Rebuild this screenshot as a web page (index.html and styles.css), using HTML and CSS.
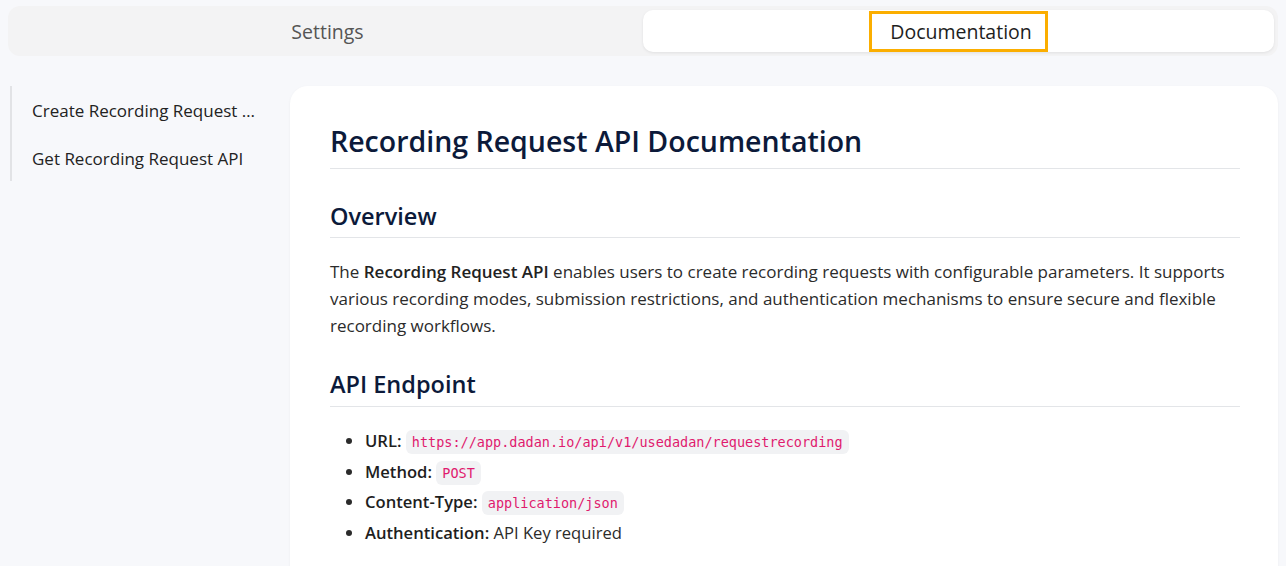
FILE: index.html
```html
<!DOCTYPE html>
<html lang="en">
<head>
<meta charset="utf-8">
<title>Documentation</title>
<link rel="stylesheet" href="styles.css">
</head>
<body>
<div class="page">
  <div class="tabs">
    <div class="tab">Settings</div>
    <div class="tab tab-active"><span class="focus">Documentation</span></div>
  </div>
  <div class="layout">
    <nav class="sidebar">
      <a class="nav-item">Create Recording Request API</a>
      <a class="nav-item">Get Recording Request API</a>
    </nav>
    <main class="card">
      <h1>Recording Request API Documentation</h1>
      <h2>Overview</h2>
      <p>The <strong>Recording Request API</strong> enables users to create recording requests with configurable parameters. It supports various recording modes, submission restrictions, and authentication mechanisms to ensure secure and flexible recording workflows.</p>
      <h2 class="h2-b">API Endpoint</h2>
      <ul>
        <li><strong>URL:</strong> <code>https://app.dadan.io/api/v1/usedadan/requestrecording</code></li>
        <li><strong>Method:</strong> <code>POST</code></li>
        <li><strong>Content-Type:</strong> <code>application/json</code></li>
        <li><strong>Authentication:</strong> API Key required</li>
      </ul>
    </main>
  </div>
</div>
</body>
</html>
```
FILE: styles.css
```css
* { box-sizing: border-box; }
html, body { margin: 0; padding: 0; }
body {
  background: #f7f8fb;
  font-family: "Open Sans", "Noto Sans", sans-serif;
  color: #222;
  overflow: hidden;
}
.page { padding: 6px 8px 0 8px; }
.tabs {
  display: grid;
  grid-template-columns: 1fr 1fr;
  background: #f3f3f4;
  border-radius: 12px;
  padding: 4px 4px;
  height: 50px;
}
.tab {
  display: flex;
  align-items: center;
  justify-content: center;
  font-size: 19.5px;
  color: #555;
  border-radius: 10px;
}
.tab-active {
  background: #fff;
  color: #1e1e1e;
  box-shadow: 0 1px 3px rgba(0,0,0,0.08);
}
.focus {
  border: 3px solid #fbae00;
  padding: 4px 13px 4px 18px;
  line-height: 27px;
}
.layout {
  display: flex;
  margin-top: 30px;
}
.sidebar {
  width: 280px;
  flex: none;
  align-self: flex-start;
  margin-left: 2px;
  border-left: 2px solid #e2e3e6;
  padding: 13px 30px 10px 20px;
  display: flex;
  flex-direction: column;
  gap: 24px;
}
.nav-item {
  font-size: 17px;
  font-weight: 500;
  color: #222;
  line-height: 24px;
  white-space: nowrap;
  overflow: hidden;
  text-overflow: ellipsis;
}
.card {
  flex: 1;
  background: #fff;
  border-radius: 18px;
  padding: 32px 38px 40px 40px;
  box-shadow: 0 1px 3px rgba(0,0,0,0.05);
  height: 600px;
}
h1 {
  margin: 0;
  font-size: 28.5px;
  font-weight: 600;
  color: #0c1a3a;
  line-height: 46px;
  padding-bottom: 4px;
  border-bottom: 1px solid #e3e5e8;
}
h2 {
  margin: 30px 0 0 0;
  font-size: 23.5px;
  font-weight: 600;
  color: #0c1a3a;
  line-height: 34px;
  padding-bottom: 4px;
  border-bottom: 1px solid #e3e5e8;
}
.h2-b { margin-top: 28px; padding-bottom: 5px; }
p {
  margin: 20px 0 0 0;
  font-size: 17px;
  line-height: 27px;
  color: #2b2b2b;
}
p strong { font-weight: 600; color: #222; }
ul {
  margin: 19px 0 0 0;
  padding-left: 35px;
  font-size: 16.6px;
  color: #2b2b2b;
}
li { line-height: 30.5px; height: 30.5px; }
li strong { font-weight: 600; color: #1e1e1e; }
code {
  font-family: "DejaVu Sans Mono", "Liberation Mono", monospace;
  font-size: 13.5px;
  line-height: 1;
  color: #e01a6e;
  background: #f1f2f4;
  border-radius: 6px;
  padding: 4px 6px;
}
```
